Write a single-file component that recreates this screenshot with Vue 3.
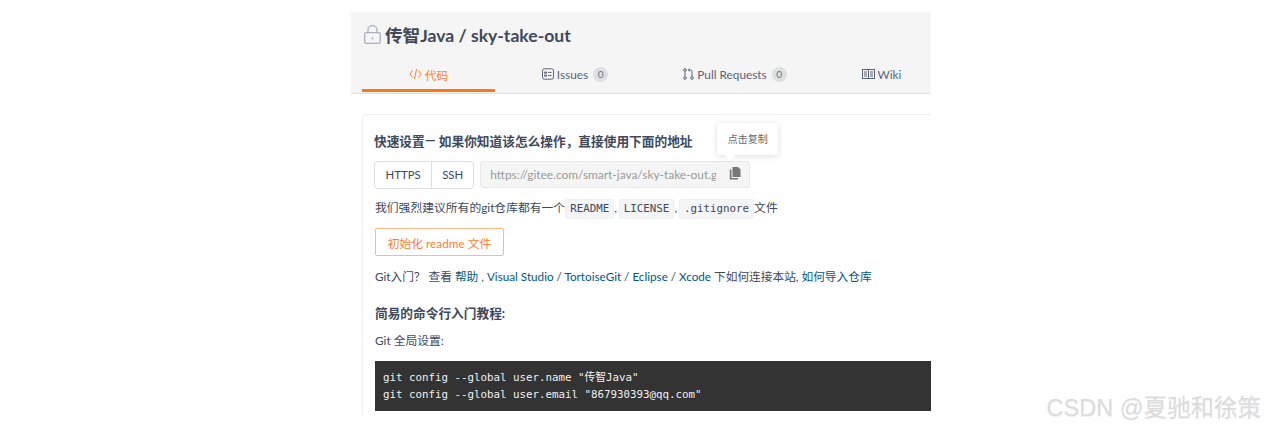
<script setup>
const tabs = [
  { name: 'code', label: '代码', active: true },
  { name: 'issues', label: 'Issues', count: 0 },
  { name: 'pr', label: 'Pull Requests', count: 0 },
  { name: 'wiki', label: 'Wiki' },
]
</script>

<template>
  <div class="stage">
    <div class="page">
      <header class="head">
        <h1 class="title">
          <svg class="lock" width="17" height="19" viewBox="0 0 17 19" fill="none" stroke="#a9afbd" stroke-width="1.3">
            <rect x="0.7" y="7.7" width="15.6" height="10.6" rx="1.5" />
            <path d="M4 7.7V4.7a4.5 4 0 0 1 9 0V7.7" />
            <path d="M8.5 12v2.4" />
          </svg>
          <span>传智Java / sky-take-out</span>
        </h1>
        <nav class="tabs">
          <a v-for="t in tabs" :key="t.name" class="tab" :class="{ active: t.active }">
            <svg v-if="t.name === 'code'" width="13" height="12" viewBox="0 0 13 12" fill="none" stroke="#f98033" stroke-width="1">
              <path d="M3.5 2.5 0.8 6l2.7 3.5M9.5 2.5 12.2 6 9.5 9.5M7.6 1 5.4 11" />
            </svg>
            <svg v-else-if="t.name === 'issues'" width="12" height="12" viewBox="0 0 12 12" fill="none" stroke="#5a6477" stroke-width="1">
              <rect x="0.5" y="0.8" width="11" height="10.4" rx="2" />
              <path d="M2.5 4h2v1.2h-2zM2.5 7h2v1.2h-2zM6 4.4h3.5M6 7.6h3.5" />
            </svg>
            <svg v-else-if="t.name === 'pr'" width="11" height="12" viewBox="0 0 11 12" fill="none" stroke="#5a6477" stroke-width="1">
              <circle cx="2" cy="2" r="1.3" />
              <circle cx="2" cy="10" r="1.3" />
              <circle cx="9" cy="10" r="1.3" />
              <path d="M2 3.3v5.4M9 8.7V3.5Q9 2 7.5 2H5.5M6.8 0.6 5.3 2l1.5 1.4" />
            </svg>
            <svg v-else width="13" height="10" viewBox="0 0 13 10" fill="none" stroke="#5a6477" stroke-width="1">
              <rect x="0.5" y="0.5" width="12" height="9" />
              <path d="M6.5 0.5v9M2 3h3M2 5h3M2 7h3M8 3h3M8 5h3M8 7h3" />
            </svg>
            <span class="tab-label">{{ t.label }}</span>
            <span v-if="t.count !== undefined" class="count">{{ t.count }}</span>
          </a>
        </nav>
      </header>

      <section class="card">
        <h3 class="setup-title">快速设置<span class="dash">—</span> 如果你知道该怎么操作，直接使用下面的地址</h3>
        <div class="url-row">
          <div class="proto">
            <span class="proto-btn first">HTTPS</span>
            <span class="proto-btn">SSH</span>
          </div>
          <div class="url-box">
            <span class="url-text">https://gitee.com/smart-java/sky-take-out.git</span>
            <svg class="copy" width="12" height="13" viewBox="0 0 12 13" fill="#777">
              <path d="M3.5 0H9l2.5 2.5V10H3.5z" />
              <path d="M0.8 2.5H2.5V11H9v1.6H0.8z" />
            </svg>
            <div class="tip">点击复制</div>
          </div>
        </div>
        <p class="advice">我们强烈建议所有的git仓库都有一个<code>README</code>,<code>LICENSE</code>,<code>.gitignore</code>文件</p>
        <button class="init-btn" type="button">初始化 readme 文件</button>
        <p class="intro">Git入门？ 查看 <a>帮助</a> , <a>Visual Studio</a> / <a>TortoiseGit</a> / <a>Eclipse</a> / <a>Xcode</a> 下如何连接本站, <a>如何导入仓库</a></p>
        <h3 class="cmd-title">简易的命令行入门教程:</h3>
        <p class="global">Git 全局设置:</p>
        <pre class="shell">git config --global user.name "传智Java"
git config --global user.email "867930393@qq.com"</pre>
      </section>
    </div>
    <div class="mark">CSDN @夏驰和徐策</div>
  </div>
</template>

<style scoped>
.stage {
  position: relative;
  width: 1264px;
  height: 429px;
  overflow: hidden;
  background: #fff;
  font-family: Lato, "Noto Sans CJK SC", sans-serif;
  color: #40485b;
}
.page {
  width: 580px;
  height: 403px;
  margin-left: 351px;
  padding-top: 12px;
  overflow: hidden;
}
.head {
  height: 82px;
  box-sizing: border-box;
  padding-left: 11px;
  background: #f5f5f5;
  border-bottom: 1px solid #e3e3e3;
  display: flex;
  flex-direction: column;
}
.title {
  margin: 0;
  height: 46px;
  padding: 0 0 2px 2px;
  box-sizing: content-box;
  display: flex;
  align-items: center;
  gap: 4px;
  font-size: 17.6px;
  font-weight: 700;
  color: #40485b;
}
.tabs {
  display: grid;
  grid-template-columns: 133px 160px 160px 133px;
  height: 34px;
}
.tab {
  display: flex;
  align-items: center;
  justify-content: center;
  gap: 3px;
  height: 33px;
  padding-bottom: 3px;
  box-sizing: border-box;
  font-size: 11.8px;
  color: #5a6477;
}
.tab.active {
  color: #f98033;
  border-bottom: 3px solid #fc7a14;
  padding-bottom: 0;
}
.count {
  margin-left: 2px;
  width: 15px;
  height: 15px;
  border-radius: 50%;
  background: #dcdfe4;
  color: #6a7385;
  font-size: 10px;
  display: flex;
  align-items: center;
  justify-content: center;
}
.card {
  margin: 20px 0 0 11px;
  height: 300px;
  box-sizing: border-box;
  padding: 13px 0 0 12px;
  border: 1px solid #eeeeee;
  border-right: 0;
  border-bottom: 0;
  border-radius: 4px 0 0 0;
}
.setup-title {
  margin: 0 0 0 -1px;
  font-size: 12.7px;
  line-height: 26px;
  font-weight: 700;
  color: #40485b;
}
.dash {
  font-family: Roboto, sans-serif;
  font-weight: 400;
  font-size: 14px;
}
.url-row {
  margin: 7px 0 0 -1px;
  display: flex;
  gap: 6px;
}
.proto {
  display: flex;
  height: 28px;
  box-sizing: border-box;
  border: 1px solid #dedede;
  border-radius: 4px;
  background: #fff;
}
.proto-btn {
  padding: 0 10px;
  font-size: 11.4px;
  line-height: 26px;
  color: #40485b;
}
.proto-btn.first {
  padding: 0 10.5px;
  border-right: 1px solid #dedede;
}
.url-box {
  position: relative;
  width: 270px;
  height: 27px;
  box-sizing: border-box;
  padding-left: 9px;
  background: #f5f5f5;
  border: 1px solid #e8e8e8;
  border-radius: 3px;
  display: flex;
  align-items: center;
}
.url-text {
  width: 226px;
  overflow: hidden;
  white-space: nowrap;
  font-size: 11.9px;
  color: #9a9a9a;
}
.copy {
  margin-left: 13px;
  margin-top: -2px;
}
.tip {
  position: absolute;
  left: 236px;
  top: -39px;
  width: 61px;
  height: 32px;
  border-radius: 3px;
  background: #fff;
  box-shadow: 0 1px 6px rgba(0, 0, 0, 0.14);
  font-size: 10px;
  line-height: 32px;
  text-align: center;
  color: #666;
}
.tip::after {
  content: "";
  position: absolute;
  left: 9px;
  bottom: -4px;
  width: 8px;
  height: 8px;
  background: #fff;
  transform: rotate(45deg);
}
.advice {
  margin: 9px 0 0;
  font-size: 11.8px;
  line-height: 20px;
  color: #40485b;
}
.advice code {
  display: inline-block;
  padding: 0 4px;
  font-family: "DejaVu Sans Mono", monospace;
  font-size: 10.8px;
  line-height: 18px;
  background: #f5f5f7;
  border: 1px solid #f0f0f2;
  border-radius: 2px;
  color: #40485b;
}
.advice code + code {
  margin-left: 2px;
}
.init-btn {
  display: block;
  margin: 9px 0 0;
  width: 129px;
  height: 28px;
  padding: 0;
  font-family: inherit;
  font-size: 11.8px;
  color: #f98033;
  background: #fff;
  border: 1px solid #fbb98a;
  border-radius: 2px;
}
.intro {
  margin: 10px 0 0;
  font-size: 11.7px;
  line-height: 20px;
  color: #40485b;
}
.intro a {
  color: #005980;
}
.cmd-title {
  margin: 17px 0 0;
  font-size: 12.7px;
  line-height: 20px;
  font-weight: 700;
  color: #40485b;
}
.global {
  margin: 8px 0 0;
  font-size: 11.8px;
  line-height: 20px;
  color: #40485b;
}
.shell {
  margin: 10px 0 0;
  height: 50px;
  box-sizing: border-box;
  padding: 8px;
  background: #333;
  color: #f0f0f0;
  font-family: "DejaVu Sans Mono", "Noto Sans CJK SC", monospace;
  font-size: 10.8px;
  line-height: 17px;
  overflow: hidden;
}
.mark {
  position: absolute;
  right: 3px;
  top: 392px;
  font-family: "Liberation Sans", "Noto Sans CJK SC", sans-serif;
  font-size: 23.5px;
  line-height: 32px;
  color: #dcdcdc;
  text-shadow: 0 1px 0 #efefef;
}
</style>
